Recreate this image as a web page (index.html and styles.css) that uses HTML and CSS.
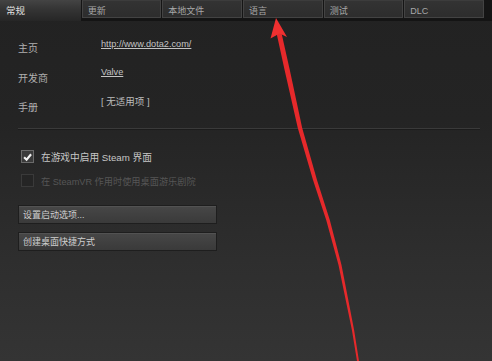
FILE: index.html
```html
<!DOCTYPE html>
<html lang="zh">
<head>
<meta charset="utf-8">
<link rel="stylesheet" href="styles.css">
</head>
<body>
<div class="window">
  <div class="tabs">
    <div class="tab active">常规</div>
    <div class="tab">更新</div>
    <div class="tab">本地文件</div>
    <div class="tab">语言</div>
    <div class="tab">测试</div>
    <div class="tab">DLC</div>
  </div>
  <div class="content">
    <div class="info">
      <div class="row"><span class="label">主页</span><a class="value link">http://www.dota2.com/</a></div>
      <div class="row"><span class="label">开发商</span><a class="value link">Valve</a></div>
      <div class="row"><span class="label">手册</span><span class="value">[ 无适用项 ]</span></div>
    </div>
    <div class="sep"></div>
    <div class="checks">
      <div class="check"><span class="box on"><svg viewBox="0 0 12 12" width="12" height="12"><path d="M2.3 6.2 L5 8.9 L9.9 3" fill="none" stroke="#f2f2f2" stroke-width="2.3"/></svg></span><span>在游戏中启用 Steam 界面</span></div>
      <div class="check disabled"><span class="box"></span><span>在 SteamVR 作用时使用桌面游乐剧院</span></div>
    </div>
    <div class="buttons">
      <div class="btn">设置启动选项...</div>
      <div class="btn">创建桌面快捷方式</div>
    </div>
  </div>
  <svg class="arrow" viewBox="0 0 492 361" width="492" height="361">
    <polygon points="276.5,33 284.6,70 297.8,128 313,180 326.2,220 338.5,265 345.7,300 351.9,330 357,361 359,361 354.1,330 348.3,300 341.5,265 329.8,220 317,180 302.2,128 289.8,70 281.5,33" fill="#e6292b"/>
    <path d="M276 18 L287 37 L279.5 33.5 L270.5 38.5 Z" fill="#f03030"/>
  </svg>
</div>
</body>
</html>
```

FILE: styles.css
```css
* { box-sizing: border-box; }
html, body { margin: 0; padding: 0; }
body {
  width: 492px;
  height: 361px;
  overflow: hidden;
  background: #2a2a2a;
  font-family: "Liberation Sans", "Noto Sans CJK SC", sans-serif;
  font-size: 9.5px;
  color: #b4b4b4;
}
.window {
  position: relative;
  width: 492px;
  height: 361px;
  background: linear-gradient(#222222 0px, #242424 120px, #2e2e2e 260px, #343434 361px);
}
.tabs {
  display: flex;
  height: 21px;
  background: #151515;
  border-bottom: 2px solid #141414;
  padding-right: 7px;
}
.tab {
  width: 80px;
  height: 18px;
  margin-right: 1px;
  background: linear-gradient(#333333, #2d2d2d);
  border: 1px solid #434343;
  border-top-color: #3c3c3c;
  color: #a8a8a8;
  padding: 4px 0 0 5px;
  line-height: 12px;
  font-size: 9px;
}
.tab.active {
  width: 81px;
  height: 21px;
  border: none;
  padding: 5px 0 0 6px;
  background: linear-gradient(#444 0px, #363636 8px, #262626 21px);
  color: #e0e0e0;
  margin-right: 1px;
  font-size: 9.5px;
}
.content {
  padding: 18px 12px 0 18px;
}
.info { display: flex; flex-direction: column; }
.row {
  display: flex;
  height: 27.5px;
}
.label {
  width: 83px;
  padding-top: 1px;
  color: #b0b0b0;
  font-size: 10px;
}
.value { color: #bcbcbc; }
.link { text-decoration: underline; color: #c4c4c4; font-size: 9.2px; }
.row:nth-child(2) .label { padding-top: 3px; }
.row:nth-child(3) .label { padding-top: 5px; }
.sep {
  height: 2px;
  margin: 6.5px 0 0 0;
  border-top: 1px solid #3a3a3a;
  border-bottom: 1px solid #1c1c1c;
}
.checks {
  display: flex;
  flex-direction: column;
  gap: 11px;
  padding: 20px 0 0 3px;
}
.check {
  display: flex;
  align-items: center;
  gap: 7px;
  height: 13px;
  color: #c6c6c6;
  font-size: 9.7px;
}
.check.disabled { color: #565656; font-size: 9.2px; }
.box {
  width: 13px;
  height: 13px;
  border: 1px solid #4a4a4a;
  background: #2a2a2a;
  display: flex;
  align-items: center;
  justify-content: center;
}
.box.on { background: #3a3a3a; border-color: #6a6a6a; }
.box svg { display: block; }
.check.disabled .box { border-color: #3a3a3a; background: #252525; }
.buttons {
  display: flex;
  flex-direction: column;
  gap: 8px;
  padding: 18px 0 0 0;
  width: 199px;
}
.btn {
  height: 19px;
  background: linear-gradient(#474747, #3a3a3a);
  border: 1px solid #1e1e1e;
  box-shadow: inset 0 1px 0 #525252;
  color: #cfcfcf;
  padding: 3px 0 0 4px;
  line-height: 12px;
  font-size: 9px;
}
.arrow {
  position: absolute;
  left: 0;
  top: 0;
  pointer-events: none;
}
```
